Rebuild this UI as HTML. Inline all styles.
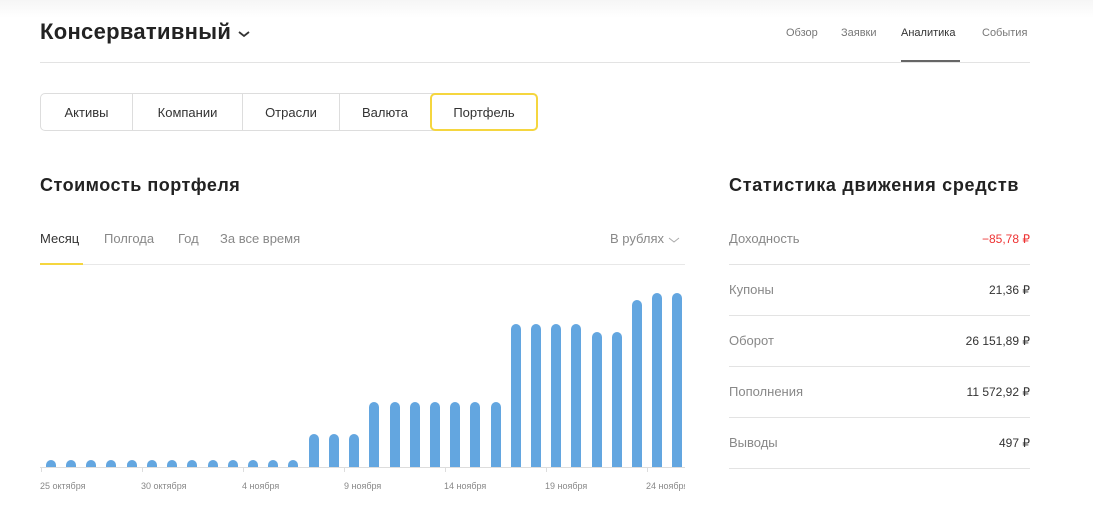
<!DOCTYPE html><html><head><meta charset="utf-8"><style>
*{margin:0;padding:0;box-sizing:border-box}
body{width:1093px;height:527px;background:#fff;font-family:"Liberation Sans",sans-serif;position:relative;overflow:hidden;color:#333}
.a{position:absolute;white-space:nowrap}
.top{position:absolute;left:0;top:0;width:1093px;height:18px;background:linear-gradient(#f6f6f6,#fff)}
.bar{position:absolute;width:10px;background:#63a6e0;border-radius:5px 5px 0 0;bottom:60px}
.tab{position:absolute;top:93px;height:38px;font-size:13px;color:#333;display:flex;align-items:center;justify-content:center}
.row{position:absolute;left:729px;width:301px;height:51px;border-bottom:1px solid #e3e3e3;font-size:13px;color:#888}
.row span{position:absolute;top:17px}
.row b{position:absolute;right:0;top:18px;font-weight:normal;color:#333;font-size:12px}
.lbl{position:absolute;top:481px;font-size:9px;color:#888}
.tick{position:absolute;top:467px;width:1px;height:5px;background:#ddd}
h1,h2{font-weight:bold;position:absolute;white-space:nowrap;color:#222}
</style></head><body>
<div class="top"></div>
<h1 style="left:40px;top:19px;font-size:22px;letter-spacing:0.3px">Консервативный</h1>
<svg class="a" style="left:237px;top:29px" width="14" height="10"><path d="M2 3l5 4 5-4" fill="none" stroke="#333" stroke-width="1.8"/></svg>
<div class="a" style="left:786px;top:27px;font-size:11px;color:#777">Обзор</div>
<div class="a" style="left:841px;top:27px;font-size:11px;color:#777">Заявки</div>
<div class="a" style="left:901px;top:27px;font-size:11px;color:#333">Аналитика</div>
<div class="a" style="left:982px;top:27px;font-size:11px;color:#777">События</div>
<div class="a" style="left:40px;top:62px;width:990px;height:1px;background:#e3e3e3"></div>
<div class="a" style="left:901px;top:60px;width:59px;height:2px;background:#666"></div>
<div class="a" style="left:40px;top:93px;width:497px;height:38px;border:1px solid #ddd;border-radius:5px"></div>
<div class="tab" style="left:41px;width:91px">Активы</div>
<div class="tab" style="left:132px;width:110px;border-left:1px solid #ddd">Компании</div>
<div class="tab" style="left:242px;width:97px;border-left:1px solid #ddd">Отрасли</div>
<div class="tab" style="left:339px;width:91px;border-left:1px solid #ddd">Валюта</div>
<div class="tab" style="left:430px;width:108px;border:2px solid #f5d63f;border-radius:5px">Портфель</div>
<h2 style="left:40px;top:175px;font-size:18px;letter-spacing:0.5px">Стоимость портфеля</h2>
<div class="a" style="left:40px;top:231px;font-size:13px;color:#333">Месяц</div>
<div class="a" style="left:104px;top:231px;font-size:13px;color:#888">Полгода</div>
<div class="a" style="left:178px;top:231px;font-size:13px;color:#888">Год</div>
<div class="a" style="left:220px;top:231px;font-size:13px;color:#888">За все время</div>
<div class="a" style="left:610px;top:231px;font-size:13px;color:#888">В рублях</div>
<svg class="a" style="left:668px;top:236px" width="12" height="8"><path d="M1 2l5 4 5-4" fill="none" stroke="#aaa" stroke-width="1"/></svg>
<div class="a" style="left:40px;top:264px;width:645px;height:1px;background:#e8e8e8"></div>
<div class="a" style="left:40px;top:263px;width:43px;height:2px;background:#f5d63f"></div>
<div class="a" style="left:40px;top:467px;width:645px;height:1px;background:#ddd"></div>
<div class="bar" style="left:46px;height:7px"></div><div class="bar" style="left:66px;height:7px"></div><div class="bar" style="left:86px;height:7px"></div><div class="bar" style="left:106px;height:7px"></div><div class="bar" style="left:127px;height:7px"></div><div class="bar" style="left:147px;height:7px"></div><div class="bar" style="left:167px;height:7px"></div><div class="bar" style="left:187px;height:7px"></div><div class="bar" style="left:208px;height:7px"></div><div class="bar" style="left:228px;height:7px"></div><div class="bar" style="left:248px;height:7px"></div><div class="bar" style="left:268px;height:7px"></div><div class="bar" style="left:288px;height:7px"></div>
<div class="bar" style="left:309px;height:33px"></div><div class="bar" style="left:329px;height:33px"></div><div class="bar" style="left:349px;height:33px"></div>
<div class="bar" style="left:369px;height:65px"></div><div class="bar" style="left:390px;height:65px"></div><div class="bar" style="left:410px;height:65px"></div><div class="bar" style="left:430px;height:65px"></div><div class="bar" style="left:450px;height:65px"></div><div class="bar" style="left:470px;height:65px"></div><div class="bar" style="left:491px;height:65px"></div>
<div class="bar" style="left:511px;height:143px"></div><div class="bar" style="left:531px;height:143px"></div><div class="bar" style="left:551px;height:143px"></div><div class="bar" style="left:571px;height:143px"></div><div class="bar" style="left:592px;height:135px"></div><div class="bar" style="left:612px;height:135px"></div>
<div class="bar" style="left:632px;height:167px"></div><div class="bar" style="left:652px;height:174px"></div><div class="bar" style="left:672px;height:174px"></div>
<div class="tick" style="left:41px"></div><div class="tick" style="left:142px"></div><div class="tick" style="left:243px"></div><div class="tick" style="left:344px"></div><div class="tick" style="left:445px"></div><div class="tick" style="left:546px"></div><div class="tick" style="left:647px"></div>
<div class="lbl" style="left:40px">25 октября</div>
<div class="lbl" style="left:141px">30 октября</div>
<div class="lbl" style="left:242px">4 ноября</div>
<div class="lbl" style="left:344px">9 ноября</div>
<div class="lbl" style="left:444px">14 ноября</div>
<div class="lbl" style="left:545px">19 ноября</div>
<div class="a" style="left:646px;top:481px;width:39px;overflow:hidden;font-size:9px;color:#888">24 ноября</div>
<h2 style="left:729px;top:175px;font-size:18px;letter-spacing:0.7px">Статистика движения средств</h2>
<div class="row" style="top:214px"><span>Доходность</span><b style="color:#ee3333">−85,78 ₽</b></div>
<div class="row" style="top:265px"><span>Купоны</span><b>21,36 ₽</b></div>
<div class="row" style="top:316px"><span>Оборот</span><b>26 151,89 ₽</b></div>
<div class="row" style="top:367px"><span>Пополнения</span><b>11 572,92 ₽</b></div>
<div class="row" style="top:418px"><span>Выводы</span><b>497 ₽</b></div>
</body></html>
